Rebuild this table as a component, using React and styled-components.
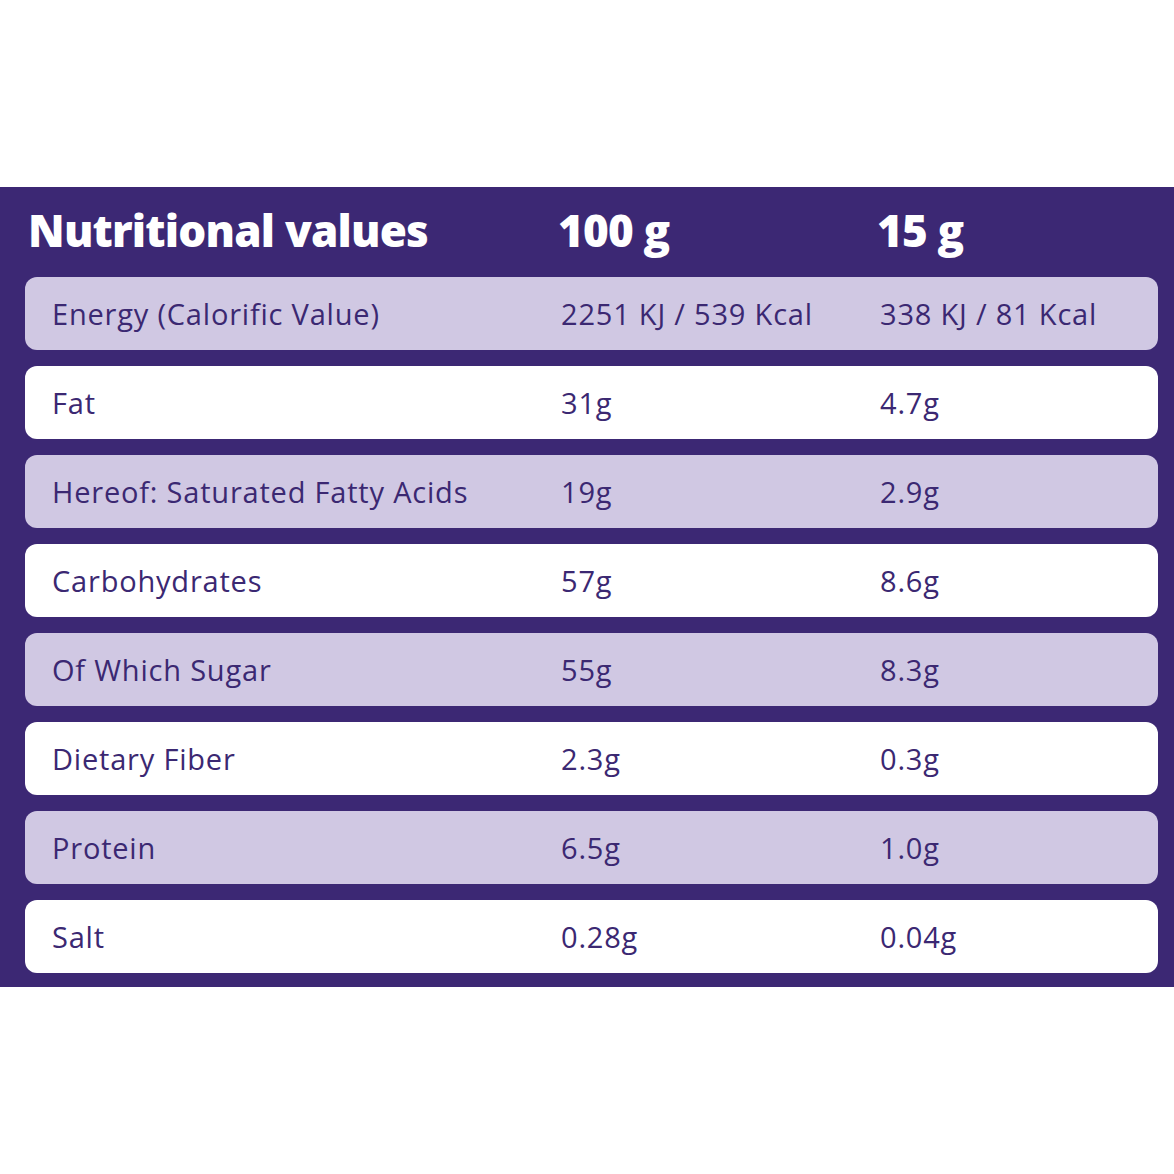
import React from "react";
import styled, { createGlobalStyle } from "styled-components";

const GlobalStyle = createGlobalStyle`
  body {
    margin: 0;
    background: #ffffff;
    font-family: "Open Sans", "Liberation Sans", sans-serif;
  }
`;

const Page = styled.div`
  width: 1174px;
  height: 1174px;
  padding-top: 187px;
  box-sizing: border-box;
`;

const Panel = styled.div`
  background: #3c2874;
  padding: 0 16px 14px 25px;
  display: flex;
  flex-direction: column;
  gap: 16px;
`;

const Header = styled.div`
  display: grid;
  grid-template-columns: 530px 319px 1fr;
  align-items: center;
  box-sizing: border-box;
  height: 74px;
  padding: 12px 0 0 3px;
  color: #ffffff;
  font-size: 44px;
  font-weight: 800;
  letter-spacing: -0.8px;
`;

const Row = styled.div`
  display: grid;
  grid-template-columns: 509px 319px 1fr;
  align-items: center;
  height: 73px;
  padding-left: 27px;
  border-radius: 12px;
  background: ${props => (props.shaded ? "#d0c8e3" : "#ffffff")};
  color: #3b2872;
  font-size: 29px;
  letter-spacing: 0.8px;
`;

const rows = [
  ["Energy (Calorific Value)", "2251 KJ / 539 Kcal", "338 KJ / 81 Kcal"],
  ["Fat", "31g", "4.7g"],
  ["Hereof: Saturated Fatty Acids", "19g", "2.9g"],
  ["Carbohydrates", "57g", "8.6g"],
  ["Of Which Sugar", "55g", "8.3g"],
  ["Dietary Fiber", "2.3g", "0.3g"],
  ["Protein", "6.5g", "1.0g"],
  ["Salt", "0.28g", "0.04g"]
];

export default function App() {
  return (
    <Page>
      <GlobalStyle />
      <Panel>
        <Header>
          <span>Nutritional values</span>
          <span>100 g</span>
          <span>15 g</span>
        </Header>
        {rows.map((r, i) => (
          <Row key={r[0]} shaded={i % 2 === 0}>
            <span>{r[0]}</span>
            <span>{r[1]}</span>
            <span>{r[2]}</span>
          </Row>
        ))}
      </Panel>
    </Page>
  );
}
